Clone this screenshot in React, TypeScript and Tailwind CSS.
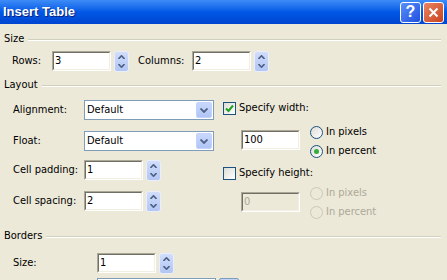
import React from 'react';

const font = { fontFamily: '"DejaVu Sans Condensed", "DejaVu Sans", sans-serif', fontStretch: 'condensed' as const };

function Chevron({ dir }: { dir: 'up' | 'down' }) {
  return (
    <svg width="7" height="4" viewBox="0 0 7 4">
      {dir === 'up' ? (
        <path d="M0.5 4 L3.5 0.8 L6.5 4" stroke="#4d6185" strokeWidth="1.6" fill="none" />
      ) : (
        <path d="M0.5 0 L3.5 3.2 L6.5 0" stroke="#4d6185" strokeWidth="1.6" fill="none" />
      )}
    </svg>
  );
}

function Spin() {
  return (
    <div className="ml-[3px] flex h-[21px] w-[15px] flex-col items-center justify-center gap-[5px] rounded-[3px] border border-[#e8eefc] bg-gradient-to-b from-[#d2ddfa] via-[#c1d1f8] to-[#b3c6f3]">
      <Chevron dir="up" />
      <Chevron dir="down" />
    </div>
  );
}

function Sunken({ value, disabled, w = 59 }: { value: string; disabled?: boolean; w?: number }) {
  return (
    <div
      className="h-[20px] border border-t-[#aca899] border-l-[#aca899] border-b-white border-r-white"
      style={{ width: w }}
    >
      <div
        className={`flex h-full items-center border border-t-[#716f64] border-l-[#716f64] border-b-[#f1efe2] border-r-[#f1efe2] pl-[1px] text-[11px] ${
          disabled ? 'bg-[#ece9d8] text-[#aca899]' : 'bg-white text-black'
        }`}
      >
        {value}
      </div>
    </div>
  );
}

function SpinBox({ value }: { value: string }) {
  return (
    <div className="flex items-center">
      <Sunken value={value} />
      <Spin />
    </div>
  );
}

function Select({ value, w = 130 }: { value: string; w?: number }) {
  return (
    <div className="flex h-[20px] items-center border border-[#7f9db9] bg-white pl-[2px]" style={{ width: w }}>
      <span className="flex-1 text-[11px] text-black">{value}</span>
      <div className="mr-[1px] flex h-[16px] w-[16px] items-center justify-center rounded-[2px] border border-[#c3d3fd] bg-gradient-to-b from-[#c9d8fb] to-[#b0c5f6]">
        <svg width="8" height="5" viewBox="0 0 8 5">
          <path d="M0.5 0.5 L4 4 L7.5 0.5" stroke="#4d6185" strokeWidth="1.8" fill="none" />
        </svg>
      </div>
    </div>
  );
}

function Checkbox({ checked }: { checked?: boolean }) {
  return (
    <div className="flex h-[13px] w-[13px] items-center justify-center border border-[#1c5180] bg-gradient-to-br from-[#dcdcd7] to-white">
      {checked && (
        <svg width="9" height="9" viewBox="0 0 9 9">
          <path d="M1 4.5 L3.5 7 L8 1.5" stroke="#21a121" strokeWidth="2" fill="none" />
        </svg>
      )}
    </div>
  );
}

function Radio({ checked, disabled, label }: { checked?: boolean; disabled?: boolean; label: string }) {
  return (
    <div className="flex h-[13px] items-center">
      <div
        className={`flex h-[13px] w-[13px] items-center justify-center rounded-full border ${
          disabled ? 'border-[#cac8bb] bg-[#ece9d8]' : 'border-[#1c5180] bg-gradient-to-br from-[#dcdcd7] to-white'
        }`}
      >
        {checked && <div className="h-[5px] w-[5px] rounded-full bg-[#36ad36]" />}
      </div>
      <span className={`ml-[3px] text-[11px] ${disabled ? 'text-[#aca899]' : 'text-black'}`}>{label}</span>
    </div>
  );
}

function GroupHeader({ title }: { title: string }) {
  return (
    <div className="flex h-[13px] items-center pr-[6px]">
      <span className="ml-[4px] text-[11px] text-black">{title}</span>
      <div className="ml-[4px] h-[2px] flex-1 border-t border-b border-t-[#d0d0bf] border-b-white" />
    </div>
  );
}

function TitleBar() {
  return (
    <div className="flex h-[24px] items-center bg-gradient-to-b from-[#3d8cf7] via-[#0058e6] to-[#0045d0] pl-[3px] pr-[3px]">
      <span
        className="flex-1 text-[13px] font-bold text-white"
        style={{ fontFamily: '"Liberation Sans", Arial, sans-serif', textShadow: '1px 1px 0 #0a1e7a' }}
      >
        Insert Table
      </span>
      <div className="flex h-[21px] w-[21px] items-center justify-center rounded-[3px] border border-white bg-gradient-to-br from-[#5b8ef8] to-[#1f4fe0]">
        <span className="text-[16px] font-bold leading-none text-white" style={{ fontFamily: '"Liberation Sans", Arial, sans-serif' }}>
          ?
        </span>
      </div>
      <div className="ml-[2px] flex h-[21px] w-[21px] items-center justify-center rounded-[3px] border border-white bg-gradient-to-br from-[#ea8460] to-[#c9401c]">
        <svg width="11" height="11" viewBox="0 0 11 11">
          <path d="M1.5 1.5 L9.5 9.5 M9.5 1.5 L1.5 9.5" stroke="white" strokeWidth="2" />
        </svg>
      </div>
    </div>
  );
}

export default function App() {
  return (
    <div className="h-[280px] w-[447px] overflow-hidden bg-[#ece9d8] text-[11px] text-black" style={font}>
      <TitleBar />
      <div className="mt-[9px]">
        <GroupHeader title="Size" />
      </div>
      <div className="mt-[5px] flex h-[20px] items-center">
        <span className="w-[52px] shrink-0 pl-[12px]">Rows:</span>
        <SpinBox value="3" />
        <span className="ml-[9px] w-[54px] shrink-0">Columns:</span>
        <SpinBox value="2" />
      </div>

      <div className="mt-[8px]">
        <GroupHeader title="Layout" />
      </div>
      <div className="mt-[8px] flex">
        <div className="flex w-[223px] flex-col pl-[13px]">
          <div className="flex h-[20px] items-center">
            <span className="w-[71px] shrink-0">Alignment:</span>
            <Select value="Default" />
          </div>
          <div className="mt-[11px] flex h-[20px] items-center">
            <span className="w-[71px] shrink-0">Float:</span>
            <Select value="Default" />
          </div>
          <div className="mt-[9px] flex h-[20px] items-center">
            <span className="w-[71px] shrink-0">Cell padding:</span>
            <SpinBox value="1" />
          </div>
          <div className="mt-[11px] flex h-[20px] items-center">
            <span className="w-[71px] shrink-0">Cell spacing:</span>
            <SpinBox value="2" />
          </div>
        </div>
        <div className="flex flex-col">
          <div className="flex h-[17px] items-center">
            <Checkbox checked />
            <span className="ml-[3px]">Specify width:</span>
          </div>
          <div className="mt-[9px] flex items-start">
            <div className="ml-[18px] mt-[4px]">
              <Sunken value="100" />
            </div>
            <div className="ml-[10px] flex flex-col gap-[6px]">
              <Radio label="In pixels" />
              <Radio label="In percent" checked />
            </div>
          </div>
          <div className="mt-[7px] flex h-[17px] items-center">
            <Checkbox />
            <span className="ml-[3px]">Specify height:</span>
          </div>
          <div className="mt-[5px] flex items-start">
            <div className="ml-[18px] mt-[5px]">
              <Sunken value="0" disabled />
            </div>
            <div className="ml-[10px] flex flex-col gap-[6px]">
              <Radio label="In pixels" disabled />
              <Radio label="In percent" disabled />
            </div>
          </div>
        </div>
      </div>

      <div className="mt-[11px]">
        <GroupHeader title="Borders" />
      </div>
      <div className="mt-[10px] flex h-[20px] items-center pl-[13px]">
        <span className="w-[84px] shrink-0">Size:</span>
        <SpinBox value="1" />
      </div>
      <div className="mt-[5px] flex items-start pl-[97px]">
        <Select value="" w={119} />
        <div className="ml-[3px] h-[20px] w-[20px] rounded-[2px] border border-[#7f9db9] bg-[#c1d3fb]" />
      </div>
    </div>
  );
}
